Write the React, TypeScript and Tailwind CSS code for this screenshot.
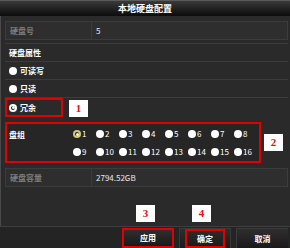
import React from "react";

const font = { fontFamily: '"Noto Sans CJK SC", "Liberation Sans", sans-serif' };

const Radio = ({ checked = false, ring = "#ffffff" }: { checked?: boolean; ring?: string }) => (
  <span
    className="inline-flex h-[8px] w-[8px] shrink-0 items-center justify-center rounded-full bg-white"
    style={checked ? { background: "#1e1e1e", boxShadow: `inset 0 0 0 2px ${ring}` } : undefined}
  >
    {checked && <span className="h-[3px] w-[3px] rounded-full bg-white" />}
  </span>
);

const Badge = ({ n, className }: { n: string; className: string }) => (
  <div
    className={`absolute flex h-[17px] w-[19px] items-center justify-center bg-white text-[11px] font-bold text-[#e01010] ${className}`}
    style={{ fontFamily: '"Liberation Serif", serif' }}
  >
    {n}
  </div>
);

const InfoRow = ({ label, value }: { label: string; value: string }) => (
  <div className="flex h-[19px] border border-[#3c3c3c] bg-[#2e2e2e]">
    <div className="flex w-[86px] items-center border-r border-[#3c3c3c] pl-[4px] text-[8px] font-bold text-[#7d7d7d]">
      {label}
    </div>
    <div className="flex items-center pl-[4px] text-[8px] text-[#e8e8e8]">{value}</div>
  </div>
);

const AttrRow = ({ children }: { children: React.ReactNode }) => (
  <div className="flex h-[18px] items-center gap-[3px] border-b border-[#3c3c3c] pl-[4px] text-[8px] font-bold text-white">
    {children}
  </div>
);

const App: React.FC = () => {
  const groups = Array.from({ length: 16 }, (_, i) => i + 1);

  return (
    <div className="relative flex h-[248px] w-[290px] flex-col overflow-hidden bg-[#2a2a2a]" style={font}>
      {/* title */}
      <div className="flex h-[16px] items-center justify-center border-t border-[#5a5a5a] bg-gradient-to-b from-[#3a3a3a] to-[#0c0c0c] text-[9px] font-bold text-white">
        本地硬盘配置
      </div>

      <div className="flex flex-1 flex-col border-l border-[#4a4a4a] pl-[4px] pr-[2px] pt-[5px]">
        <InfoRow label="硬盘号" value="5" />

        <div className="mt-[3px] flex flex-col border-t border-[#3c3c3c]">
          <AttrRow>硬盘属性</AttrRow>
          <AttrRow>
            <Radio />
            可读写
          </AttrRow>
          <AttrRow>
            <Radio />
            只读
          </AttrRow>
          <div className="flex h-[19px] items-center">
            <div className="relative flex h-[19px] w-[58px] items-center gap-[3px] border-2 border-[#e00000] pl-[2px] text-[8px] font-bold text-white">
              <Radio checked />
              冗余
            </div>
          </div>
        </div>

        <div className="mt-[5px] flex h-[41px] w-[256px] border-2 border-[#e00000] bg-[#262626]">
          <div className="w-[66px] pl-[2px] pt-[5px] text-[8px] font-bold text-white">盘组</div>
          <div className="grid grid-cols-8 content-center gap-y-[9px] pt-[1px]">
            {groups.map((g) => (
              <div key={g} className="flex h-[9px] w-[23px] items-center gap-[1px] text-[8px] text-white">
                <Radio checked={g === 1} ring="#d8c870" />
                {g}
              </div>
            ))}
          </div>
        </div>

        <div className="mt-[5px]">
          <InfoRow label="硬盘容量" value="2794.52GB" />
        </div>

        <div className="flex-1" />
      </div>

      {/* buttons */}
      <div className="flex h-[22px] justify-end gap-[5px] border-t border-[#3e3e3e] bg-[#242424] pr-[2px] pt-[1px]">
        <div className="flex w-[52px] items-center justify-center border-2 border-[#e00000] bg-gradient-to-b from-[#2e2e2e] to-[#1a1a1a] text-[8px] font-bold text-white">
          应用
        </div>
        <div className="flex w-[52px] items-center justify-center border-x border-t border-[#3a3a3a] bg-gradient-to-b from-[#2e2e2e] to-[#1a1a1a]">
          <div className="flex h-full w-[40px] items-center justify-center border-2 border-[#e00000] text-[8px] font-bold text-white">
            确定
          </div>
        </div>
        <div className="flex w-[52px] items-center justify-center border-l border-t border-[#3a3a3a] bg-gradient-to-b from-[#2e2e2e] to-[#1a1a1a] text-[8px] font-bold text-white">
          取消
        </div>
      </div>

      {/* callout numbers */}
      <Badge n="1" className="left-[69px] top-[100px]" />
      <Badge n="2" className="left-[264px] top-[134px]" />
      <Badge n="3" className="left-[136px] top-[205px]" />
      <Badge n="4" className="left-[192px] top-[205px]" />
    </div>
  );
};

export default App;
